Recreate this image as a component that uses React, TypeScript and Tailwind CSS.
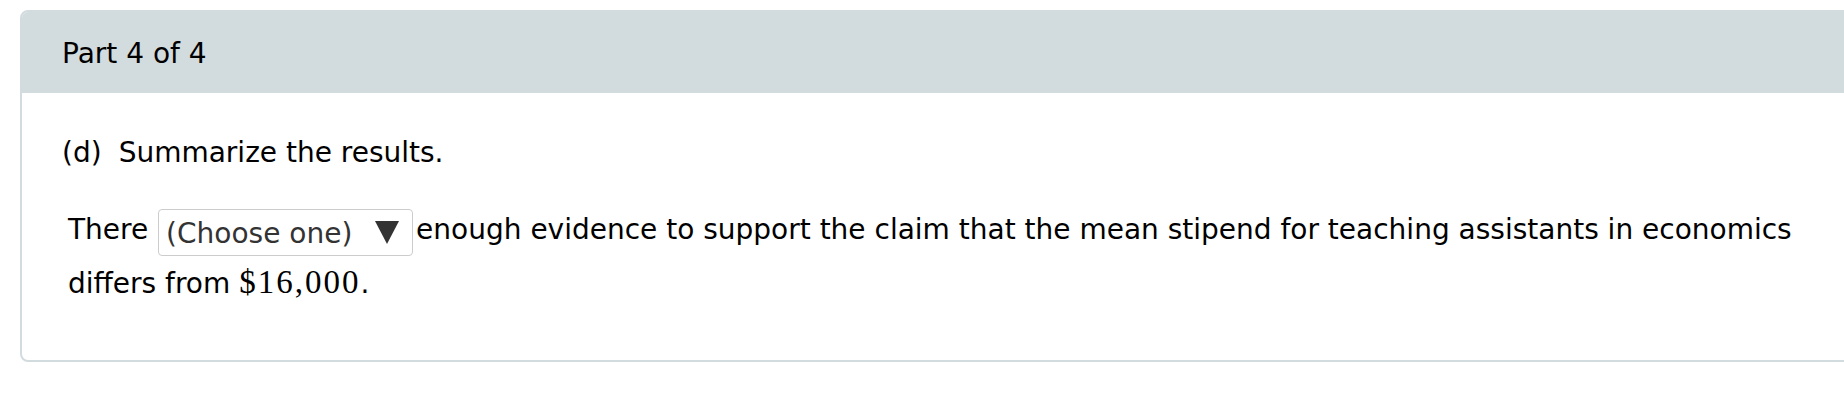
export default function App() {
    return (
        <div className="w-[1844px] h-[408px] overflow-hidden bg-white pt-[10px] pl-[20px] font-['DejaVu_Sans',Verdana,sans-serif] text-[28px] text-black">
            <div className="w-[1900px] border-2 border-[#d2dbde] rounded-lg overflow-hidden">
                <div className="h-[81px] bg-[#d2dbde] flex items-center pl-[40px]">
                    <span className="leading-none pt-[2px]">Part 4 of 4</span>
                </div>
                <div className="pl-[40px] pt-[40px] pb-[49px]">
                    <p className="leading-[40px]">
                        <span className="mr-[17px]">(d)</span>Summarize the results.
                    </p>
                    <p className="mt-[30px] pl-[6px] leading-[54px]">
                        There{" "}
                        <span className="inline-flex align-bottom h-[47px] w-[255px] ml-[1px] mb-[1px] items-center justify-between border border-[#cccccc] rounded-[4px] pl-[7px] pr-[13px] pt-[2px] text-[#333333] leading-normal">
                            <span>(Choose one)</span>
                            <svg width="24" height="23" viewBox="0 0 24 23" className="mb-[3px]">
                                <polygon points="0,0 24,0 12,23" fill="#333333" />
                            </svg>
                        </span>
                        <span className="ml-[3px]">enough evidence to support the claim that the mean stipend for teaching assistants in economics</span>
                        <br />
                        differs from{" "}
                        <span className="font-['Liberation_Serif',serif] text-[33px] tracking-[2px] leading-none">$16,000</span>.
                    </p>
                </div>
            </div>
        </div>
    );
}
